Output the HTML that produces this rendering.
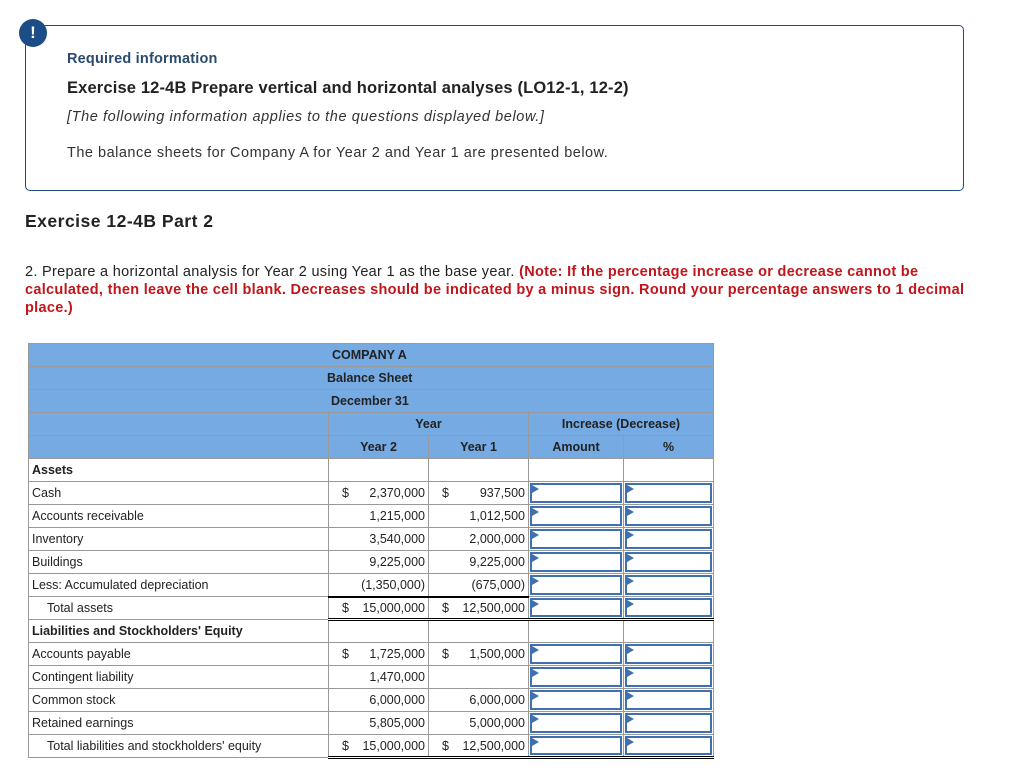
<!DOCTYPE html>
<html><head><meta charset="utf-8"><style>
*{margin:0;padding:0;box-sizing:border-box}
body{width:1016px;height:773px;background:#fff;font-family:"Liberation Sans",Arial,sans-serif;position:relative;overflow:hidden;color:#222}
.box{position:absolute;left:25px;top:25px;width:939px;height:166px;border:1px solid #1d4b82;border-radius:5px}
.badge{position:absolute;left:19px;top:19px;width:28px;height:28px;border-radius:50%;background:#1c4d86;color:#fff;font-weight:bold;font-size:17px;text-align:center;line-height:28px}
.t{position:absolute;white-space:nowrap}
table{position:absolute;left:28px;top:343px;border-collapse:collapse;table-layout:fixed;font-size:12.5px}
td{height:23px;border:1px solid #999;padding:0 3px;white-space:nowrap;position:relative}
.h td{background:#76aae3;font-weight:bold;color:#222;text-align:center}
.r{text-align:right}
.inp{padding:0}
.inp div{position:absolute;left:1px;top:1px;right:1px;bottom:1px;border:2px solid #3f70b0}
.inp div:before{content:"";position:absolute;left:0;top:0;border-left:7px solid #3f70b0;border-top:4px solid transparent;border-bottom:4px solid transparent}
.d{float:left;padding-left:10px}
.tb td.n{border-bottom:3px double #000}
.ul td.n{border-bottom:2px solid #000}
</style></head><body>
<div class="box"></div>
<div class="badge">!</div>
<div class="t" style="left:67px;top:51px;font-size:14.5px;font-weight:bold;color:#2a4a70;letter-spacing:0.2px">Required information</div>
<div class="t" style="left:67px;top:79px;font-size:16.5px;font-weight:bold;color:#222;letter-spacing:0.15px">Exercise 12-4B Prepare vertical and horizontal analyses (LO12-1, 12-2)</div>
<div class="t" style="left:67px;top:109px;font-size:14.5px;font-style:italic;color:#333;letter-spacing:0.6px">[The following information applies to the questions displayed below.]</div>
<div class="t" style="left:67px;top:145px;font-size:14.5px;color:#333;letter-spacing:0.5px">The balance sheets for Company A for Year 2 and Year 1 are presented below.</div>
<div class="t" style="left:25px;top:211px;font-size:17.5px;font-weight:bold;color:#222;letter-spacing:0.5px">Exercise 12-4B Part 2</div>
<div class="t" style="left:25px;top:263px;font-size:14.5px;line-height:18px;color:#222;letter-spacing:0.3px">2. Prepare a horizontal analysis for Year 2 using Year 1 as the base year. <b style="color:#c0161b">(Note: If the percentage increase or decrease cannot be</b><br><b style="color:#c0161b">calculated, then leave the cell blank. Decreases should be indicated by a minus sign. Round your percentage answers to 1 decimal</b><br><b style="color:#c0161b">place.)</b></div>
<table>
<colgroup><col style="width:300px"><col style="width:100px"><col style="width:100px"><col style="width:95px"><col style="width:90px"></colgroup>
<tr class="h"><td colspan="5" style="text-align:left;padding-left:303px">COMPANY A</td></tr>
<tr class="h"><td colspan="5" style="text-align:left;padding-left:298px">Balance Sheet</td></tr>
<tr class="h"><td colspan="5" style="text-align:left;padding-left:302px">December 31</td></tr>
<tr class="h"><td></td><td colspan="2">Year</td><td colspan="2">Increase (Decrease)</td></tr>
<tr class="h"><td></td><td>Year 2</td><td>Year 1</td><td>Amount</td><td>%</td></tr>
<tr><td><b>Assets</b></td><td></td><td></td><td></td><td></td></tr>
<tr><td>Cash</td><td class="r"><span class="d">$</span>2,370,000</td><td class="r"><span class="d">$</span>937,500</td><td class="inp"><div></div></td><td class="inp"><div></div></td></tr>
<tr><td>Accounts receivable</td><td class="r">1,215,000</td><td class="r">1,012,500</td><td class="inp"><div></div></td><td class="inp"><div></div></td></tr>
<tr><td>Inventory</td><td class="r">3,540,000</td><td class="r">2,000,000</td><td class="inp"><div></div></td><td class="inp"><div></div></td></tr>
<tr><td>Buildings</td><td class="r">9,225,000</td><td class="r">9,225,000</td><td class="inp"><div></div></td><td class="inp"><div></div></td></tr>
<tr class="ul"><td>Less: Accumulated depreciation</td><td class="r n">(1,350,000)</td><td class="r n">(675,000)</td><td class="inp"><div></div></td><td class="inp"><div></div></td></tr>
<tr class="tb"><td style="padding-left:18px">Total assets</td><td class="r n"><span class="d">$</span>15,000,000</td><td class="r n"><span class="d">$</span>12,500,000</td><td class="inp n"><div></div></td><td class="inp n"><div></div></td></tr>
<tr><td><b>Liabilities and Stockholders' Equity</b></td><td></td><td></td><td></td><td></td></tr>
<tr><td>Accounts payable</td><td class="r"><span class="d">$</span>1,725,000</td><td class="r"><span class="d">$</span>1,500,000</td><td class="inp"><div></div></td><td class="inp"><div></div></td></tr>
<tr><td>Contingent liability</td><td class="r">1,470,000</td><td class="r"></td><td class="inp"><div></div></td><td class="inp"><div></div></td></tr>
<tr><td>Common stock</td><td class="r">6,000,000</td><td class="r">6,000,000</td><td class="inp"><div></div></td><td class="inp"><div></div></td></tr>
<tr class="ul"><td>Retained earnings</td><td class="r">5,805,000</td><td class="r">5,000,000</td><td class="inp"><div></div></td><td class="inp"><div></div></td></tr>
<tr class="tb"><td style="padding-left:18px">Total liabilities and stockholders' equity</td><td class="r n"><span class="d">$</span>15,000,000</td><td class="r n"><span class="d">$</span>12,500,000</td><td class="inp n"><div></div></td><td class="inp n"><div></div></td></tr>
</table>
</body></html>
